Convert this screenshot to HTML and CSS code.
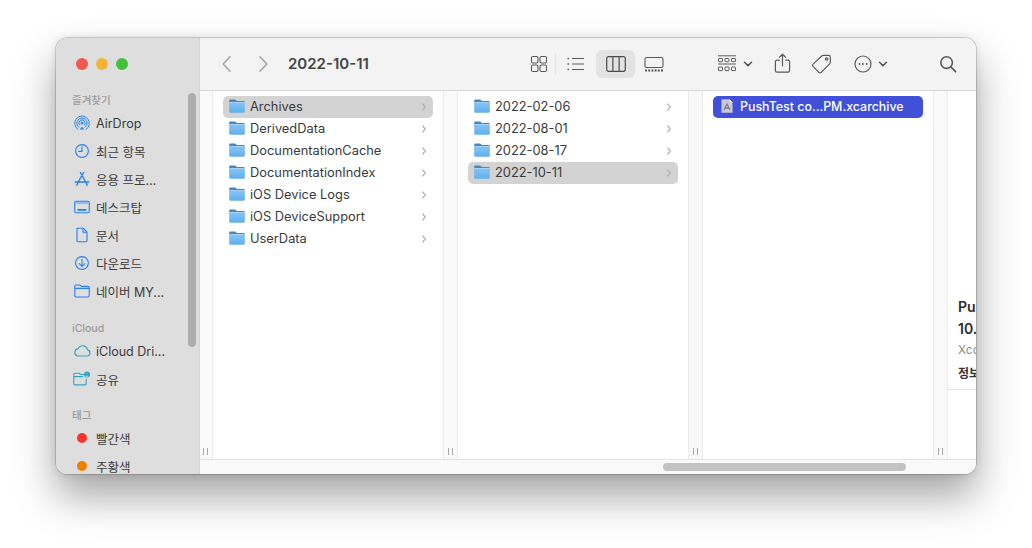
FILE: index.html
```html
<!DOCTYPE html>
<html lang="ko">
<head>
<meta charset="utf-8">
<title>Finder</title>
<link rel="stylesheet" href="styles.css">
</head>
<body>
<svg class="defs" width="0" height="0" aria-hidden="true">
  <defs>
    <linearGradient id="fg" x1="0" y1="0" x2="0" y2="1"><stop offset="0" stop-color="#86c5f7"/><stop offset="1" stop-color="#62aeea"/></linearGradient>
    <symbol id="folder" viewBox="0 0 16 14">
      <path d="M1.5 0.5h4.2c.6 0 .9.2 1.3.6l.8.9h6.7c.8 0 1.3.5 1.3 1.3v1.2H.2V1.8C.2 1 .7.5 1.5.5z" fill="#4a86b8"/>
      <rect x="0.2" y="3" width="15.6" height="10.8" rx="1.3" fill="url(#fg)"/>
      <rect x="0.2" y="3" width="15.6" height="1" fill="#a5d3f7"/>
    </symbol>
    <symbol id="chev" viewBox="0 0 6 10"><path d="M1.6 2 4.4 5 1.6 8" fill="none" stroke="#b0b0b0" stroke-width="1.1" stroke-linecap="round" stroke-linejoin="round"/></symbol>
    <symbol id="down" viewBox="0 0 10 6"><path d="M1.5 1.2 5 4.6l3.5-3.4" fill="none" stroke="#555" stroke-width="1.5" stroke-linecap="round" stroke-linejoin="round"/></symbol>
  </defs>
</svg>
<main class="window">
  <aside class="sidebar">
    <div class="lights"><span class="light red"></span><span class="light yellow"></span><span class="light green"></span></div>
    <h2 class="side-head first">즐겨찾기</h2>
    <div class="side-row"><svg class="side-icon" viewBox="0 0 16 16" fill="none" stroke="#2a7ff2" stroke-width="1"><path d="M4.3 14.6A7.3 7.3 0 1 1 11.7 14.6"/><path d="M5.2 12.5a5.1 5.1 0 1 1 5.6 0"/><path d="M6.2 10.3a3 3 0 1 1 3.6 0"/><circle cx="8" cy="8" r="1" fill="#2a7ff2"/><path d="M5.8 14.5 8 11.5l2.2 3z" fill="#2a7ff2" stroke="none"/></svg><span>AirDrop</span></div>
    <div class="side-row"><svg class="side-icon" viewBox="0 0 16 16" fill="none" stroke="#2a7ff2" stroke-width="1.1"><circle cx="8" cy="8" r="6.4"/><path d="M8 3.6V8.4H4.6" stroke-linecap="round"/></svg><span>최근 항목</span></div>
    <div class="side-row"><svg class="side-icon" viewBox="0 0 16 16" fill="none" stroke="#2a7ff2" stroke-width="1.4" stroke-linecap="round"><path d="M9.6 1.5 3.4 12.5M6.4 1.5 12.6 12.5M1.2 11h13.6"/><path d="M2.8 14.2 3.6 12.8M13.2 14.2 12.4 12.8"/></svg><span>응용 프로…</span></div>
    <div class="side-row"><svg class="side-icon" viewBox="0 0 16 16" fill="none" stroke="#2a7ff2" stroke-width="1.1"><rect x="0.7" y="2.2" width="14.6" height="11.6" rx="1.6"/><path d="M1 3h14v2H1z" fill="#8ebcf3" stroke="none"/><rect x="3.5" y="10" width="9" height="1.8" fill="#2a7ff2" stroke="none"/></svg><span>데스크탑</span></div>
    <div class="side-row"><svg class="side-icon" viewBox="0 0 16 16" fill="none" stroke="#2a7ff2" stroke-width="1.1" stroke-linejoin="round"><path d="M3 1.2h6.2L13 5.2v8.2c0 .8-.5 1.4-1.4 1.4H4.4c-.9 0-1.4-.6-1.4-1.4z"/><path d="M9 1.4v3.9h3.9"/></svg><span>문서</span></div>
    <div class="side-row"><svg class="side-icon" viewBox="0 0 16 16" fill="none" stroke="#2a7ff2" stroke-width="1.1" stroke-linecap="round" stroke-linejoin="round"><circle cx="8" cy="8" r="6.4"/><path d="M8 4.4v6.8M5.2 8.6 8 11.4l2.8-2.8"/></svg><span>다운로드</span></div>
    <div class="side-row"><svg class="side-icon" viewBox="0 0 16 16" fill="none" stroke="#2a7ff2" stroke-width="1.1" stroke-linejoin="round"><path d="M.8 4V3.2c0-.8.5-1.2 1.2-1.2h3.4c.5 0 .8.2 1.1.5l.8.9H14c.8 0 1.2.5 1.2 1.2v8.2c0 .8-.4 1.2-1.2 1.2H2c-.7 0-1.2-.4-1.2-1.2z"/><path d="M.8 5.4h14.4"/></svg><span>네이버 MY...</span></div>
    <h2 class="side-head cloud">iCloud</h2>
    <div class="side-row"><svg class="side-icon wide" viewBox="0 0 18 16" fill="none" stroke="#35a3c4" stroke-width="1.1"><path d="M4.5 13h9.5a3.1 3.1 0 0 0 .6-6.1A5 5 0 0 0 5.2 5.6 3.8 3.8 0 0 0 4.5 13z"/></svg><span>iCloud Dri...</span></div>
    <div class="side-row"><svg class="side-icon wide" viewBox="0 0 18 16" fill="none" stroke="#35a3c4" stroke-width="1.1" stroke-linejoin="round"><path d="M11 3.5H7.4l-1-1.2H2c-.7 0-1.2.4-1.2 1.2v9.2c0 .7.5 1.2 1.2 1.2h10c.8 0 1.2-.5 1.2-1.2V8"/><path d="M.8 5.6H10"/><circle cx="14" cy="3.6" r="3" fill="#35a3c4" stroke="none"/><circle cx="14" cy="2.7" r=".9" fill="#fff"/><path d="M12.4 5.4c.3-1 3-1 3.2 0z" fill="#fff" stroke="none"/></svg><span>공유</span></div>
    <h2 class="side-head tags">태그</h2>
    <div class="side-row"><span class="tag-dot dot-red"></span><span>빨간색</span></div>
    <div class="side-row"><span class="tag-dot dot-orange"></span><span>주황색</span></div>
    <div class="side-scroll"></div>
  </aside>
  <section class="content">
    <header class="toolbar">
      <svg class="nav back" viewBox="0 0 18 18" fill="none" stroke="#a5a5a5" stroke-width="1.6" stroke-linecap="round" stroke-linejoin="round"><path d="M12 1.8 5.2 9 12 16.2"/></svg>
      <svg class="nav fwd" viewBox="0 0 18 18" fill="none" stroke="#a5a5a5" stroke-width="1.6" stroke-linecap="round" stroke-linejoin="round"><path d="M6 1.8 12.8 9 6 16.2"/></svg>
      <h1 class="title">2022-10-11</h1>
      <div class="tools">
        <svg class="t t-grid" viewBox="0 0 18 18" fill="none" stroke="#5a5a5a" stroke-width="1.1"><rect x="1.5" y="1.5" width="6.5" height="6.5" rx="1.4"/><rect x="10" y="1.5" width="6.5" height="6.5" rx="1.4"/><rect x="1.5" y="10" width="6.5" height="6.5" rx="1.4"/><rect x="10" y="10" width="6.5" height="6.5" rx="1.4"/></svg>
        <span class="t-sep"></span>
        <svg class="t t-list" viewBox="0 0 19 18" fill="none" stroke="#5a5a5a" stroke-width="1.2"><path d="M6 3.5h12M6 9h12M6 14.5h12"/><path d="M1.5 3.5h1.6M1.5 9h1.6M1.5 14.5h1.6" stroke-width="1.6"/></svg>
        <span class="t-active"><svg class="t-cols" viewBox="0 0 20 16" fill="none" stroke="#4a4a4a" stroke-width="1.2"><rect x=".7" y=".7" width="18.6" height="14.6" rx="2"/><path d="M6.9 .7v14.6M13.1 .7v14.6"/></svg></span>
        <svg class="t t-gal" viewBox="0 0 20 18" fill="none" stroke="#5a5a5a" stroke-width="1.1"><rect x="1" y="2.5" width="18" height="10" rx="1.6"/><path d="M1 15.5h18" stroke-width="2" stroke-dasharray="2 1.2"/></svg>
        <svg class="t t-group" viewBox="0 0 20 18" fill="none" stroke="#5a5a5a" stroke-width="1"><path d="M1 .8h18M1 9h18"/><rect x="1.5" y="3.5" width="4" height="3.2" rx=".6"/><rect x="8" y="3.5" width="4" height="3.2" rx=".6"/><rect x="14.5" y="3.5" width="4" height="3.2" rx=".6"/><rect x="1.5" y="12" width="4" height="3.6" rx=".6"/><rect x="8" y="12" width="4" height="3.6" rx=".6"/><rect x="14.5" y="12" width="4" height="3.6" rx=".6"/></svg>
        <svg class="t-chev c-group"><use href="#down"/></svg>
        <svg class="t t-share" viewBox="0 0 17 20" fill="none" stroke="#5a5a5a" stroke-width="1.2" stroke-linecap="round" stroke-linejoin="round"><path d="M5.2 7.2H3c-1 0-1.6.6-1.6 1.6v8.8c0 1 .6 1.6 1.6 1.6h11c1 0 1.6-.6 1.6-1.6V8.8c0-1-.6-1.6-1.6-1.6h-2.2"/><path d="M8.5 13V1.2M5.4 4.2 8.5 1.2l3.1 3"/></svg>
        <svg class="t t-tag" viewBox="0 0 21 20" fill="none" stroke="#5a5a5a" stroke-width="1.2" stroke-linejoin="round"><path d="M12.4 1.4h5.2c1 0 1.7.7 1.7 1.7v5.2c0 .5-.2 1-.5 1.3l-8.6 8.7c-.7.7-1.6.7-2.3 0l-5.8-5.9c-.7-.7-.7-1.6 0-2.3l8.9-8.3c.4-.3.9-.4 1.4-.4z"/><circle cx="15.6" cy="5" r="1.2"/></svg>
        <svg class="t t-more" viewBox="0 0 18 18" fill="none" stroke="#5a5a5a" stroke-width="1.2"><circle cx="9" cy="9" r="8"/><circle cx="5.4" cy="9" r=".9" fill="#5a5a5a" stroke="none"/><circle cx="9" cy="9" r=".9" fill="#5a5a5a" stroke="none"/><circle cx="12.6" cy="9" r=".9" fill="#5a5a5a" stroke="none"/></svg>
        <svg class="t-chev c-more"><use href="#down"/></svg>
        <svg class="t t-search" viewBox="0 0 18 18" fill="none" stroke="#5a5a5a" stroke-width="1.6" stroke-linecap="round"><circle cx="7.6" cy="7.6" r="5.8"/><path d="M11.9 11.9 16.6 16.6"/></svg>
      </div>
    </header>
    <div class="browser">
      <div class="strip strip-first"><span class="grip"></span></div>
      <div class="column">
        <div class="row selected"><svg class="fold"><use href="#folder"/></svg><span class="name">Archives</span><svg class="arrow"><use href="#chev"/></svg></div>
        <div class="row"><svg class="fold"><use href="#folder"/></svg><span class="name">DerivedData</span><svg class="arrow"><use href="#chev"/></svg></div>
        <div class="row"><svg class="fold"><use href="#folder"/></svg><span class="name">DocumentationCache</span><svg class="arrow"><use href="#chev"/></svg></div>
        <div class="row"><svg class="fold"><use href="#folder"/></svg><span class="name">DocumentationIndex</span><svg class="arrow"><use href="#chev"/></svg></div>
        <div class="row"><svg class="fold"><use href="#folder"/></svg><span class="name">iOS Device Logs</span><svg class="arrow"><use href="#chev"/></svg></div>
        <div class="row"><svg class="fold"><use href="#folder"/></svg><span class="name">iOS DeviceSupport</span><svg class="arrow"><use href="#chev"/></svg></div>
        <div class="row"><svg class="fold"><use href="#folder"/></svg><span class="name">UserData</span><svg class="arrow"><use href="#chev"/></svg></div>
      </div>
      <div class="strip"><span class="grip"></span></div>
      <div class="column">
        <div class="row"><svg class="fold"><use href="#folder"/></svg><span class="name">2022-02-06</span><svg class="arrow"><use href="#chev"/></svg></div>
        <div class="row"><svg class="fold"><use href="#folder"/></svg><span class="name">2022-08-01</span><svg class="arrow"><use href="#chev"/></svg></div>
        <div class="row"><svg class="fold"><use href="#folder"/></svg><span class="name">2022-08-17</span><svg class="arrow"><use href="#chev"/></svg></div>
        <div class="row selected"><svg class="fold"><use href="#folder"/></svg><span class="name">2022-10-11</span><svg class="arrow"><use href="#chev"/></svg></div>
      </div>
      <div class="strip"><span class="grip"></span></div>
      <div class="column">
        <div class="row active"><svg class="fold doc" viewBox="0 0 16 14"><path d="M2.5 .3h8l3 3v10.4h-11z" fill="#c9cad6"/><path d="M10.5 .3v3h3z" fill="#eceef8"/><path d="M5 11 8 5l3 6M6 9.2h4" fill="none" stroke="#74768c" stroke-width="1.2"/></svg><span class="name">PushTest co...PM.xcarchive</span></div>
      </div>
      <div class="strip"><span class="grip"></span></div>
      <div class="preview">
        <div class="info">
          <div class="p-title">PushTest</div>
          <div class="p-title">10.11.22</div>
          <div class="p-kind">Xcode</div>
          <div class="p-label">정보</div>
        </div>
      </div>
    </div>
    <div class="hbar"><span class="hthumb"></span></div>
  </section>
</main>
</body>
</html>
```
FILE: styles.css
```css
* { box-sizing: border-box; }
html, body { margin: 0; height: 100%; background: #fff; overflow: hidden; }
body { padding: 38px 0 0 56px; font-family: Inter, "Noto Sans CJK KR", sans-serif; color: #3a3a3a; }
.defs { position: absolute; }

.window {
  width: 920px; height: 436px; display: flex; border-radius: 11px; overflow: hidden; background: #fff;
  box-shadow: 0 22px 42px rgba(0,0,0,.36), 0 0 8px rgba(0,0,0,.12), 0 0 0 .5px rgba(0,0,0,.28);
}

/* Sidebar */
.sidebar { position: relative; width: 144px; flex: none; background: #dedede; padding: 0 0 0 16px; overflow: hidden; border-right: 1px solid #d4d4d4; }
.lights { display: flex; gap: 8px; padding: 20px 0 0 4px; height: 50px; }
.light { width: 12px; height: 12px; border-radius: 50%; }
.red { background: #ee5a50; }
.yellow { background: #f2b535; }
.green { background: #45c03c; }
.side-head { margin: 0; font: 500 10.5px/14px Inter, "Noto Sans CJK KR", sans-serif; color: #9b9b9b; height: 14px; }
.side-head.first { margin-top: 6px; }
.side-head.cloud { margin-top: 17px; }
.side-head.tags { margin-top: 16px; }
.side-row { display: flex; align-items: center; gap: 6px; height: 28px; font-size: 12.5px; color: #3c3c3c; white-space: nowrap; }
.side-head + .side-row { margin-top: 1px; }
.side-icon { width: 16px; height: 16px; margin-left: 2px; flex: none; }
.side-icon.wide { width: 18px; margin-left: 1px; margin-right: -1px; }
.tag-dot { width: 10px; height: 10px; border-radius: 50%; margin: 0 3px 0 5px; flex: none; }
.dot-red { background: #fa3529; }
.dot-orange { background: #ee8000; }
.side-scroll { position: absolute; left: 132px; top: 55px; width: 8px; height: 254px; border-radius: 4px; background: #adadad; }

/* Content */
.content { flex: 1; min-width: 0; display: flex; flex-direction: column; }
.toolbar { height: 53px; flex: none; display: flex; align-items: center; background: #f3f3f3; border-bottom: 1px solid #d9d9d9; padding: 0 19px 1px 18px; }
.nav { width: 18px; height: 18px; flex: none; }
.fwd { margin-left: 18px; }
.title { margin: 0 0 0 16px; font: 600 15px/20px Inter, sans-serif; color: #444; white-space: nowrap; }
.tools { margin-left: auto; display: flex; align-items: center; }
.t { flex: none; height: 18px; }
.t-grid { width: 18px; }
.t-sep { width: 1px; height: 20px; background: #e0e0e0; margin-left: 7px; }
.t-list { width: 19px; margin-left: 10px; }
.t-active { width: 39px; height: 28px; margin-left: 11px; border-radius: 6px; background: #e3e3e3; display: flex; align-items: center; justify-content: center; }
.t-cols { width: 20px; height: 16px; }
.t-gal { width: 20px; margin-left: 9px; }
.t-group { width: 20px; margin-left: 53px; }
.t-chev { width: 10px; height: 6px; flex: none; margin-left: 6px; }
.t-share { width: 17px; height: 20px; margin-left: 21px; margin-top: -2px; }
.t-tag { width: 21px; height: 20px; margin-left: 20px; }
.t-more { width: 18px; margin-left: 22px; }
.t-search { width: 18px; margin-left: 51px; }

/* Browser */
.browser { flex: 1; min-height: 0; display: flex; background: #fff; overflow: hidden; }
.strip { width: 15px; flex: none; background: #f9f9f9; border-left: 1px solid #ebebeb; border-right: 1px solid #ebebeb; display: flex; align-items: flex-end; justify-content: center; padding-bottom: 4px; }
.strip-first { width: 13px; border-left: 0; padding-right: 1px; }
.grip { width: 5px; height: 7px; border-left: 1px solid #a8a8a8; border-right: 1px solid #a8a8a8; }
.column { width: 230px; flex: none; padding: 5px 10px; }
.row { height: 22px; display: flex; align-items: center; padding: 0 6px; border-radius: 5px; font-size: 12.85px; color: #3a3a3a; white-space: nowrap; }
.row.selected { background: #d3d3d3; }
.row.active { background: #4050d8; color: #fff; font-weight: 500; font-size: 12.4px; }
.fold { width: 16px; height: 14px; flex: none; margin: 0 5px 2px 0; }
.name { flex: 1; min-width: 0; padding-bottom: 2px; }
.arrow { width: 6px; height: 10px; flex: none; }

.preview { flex: 1; min-width: 0; overflow: hidden; padding-top: 205px; }
.info { padding: 0 0 3px 10px; border-bottom: 1px solid #e6e6e6; white-space: nowrap; }
.p-title { font: 600 14px/22px Inter, sans-serif; color: #2c2c2c; }
.p-kind { font-size: 12px; line-height: 20px; color: #8d8d8d; }
.p-label { font: 600 12px/24px Inter, "Noto Sans CJK KR", sans-serif; color: #333; margin-top: 2px; }

.hbar { height: 15px; flex: none; background: #f9f9f9; border-top: 1px solid #e4e4e4; padding: 3px 0 0 463px; }
.hthumb { display: block; width: 243px; height: 8px; border-radius: 4px; background: #c2c2c2; }
```
